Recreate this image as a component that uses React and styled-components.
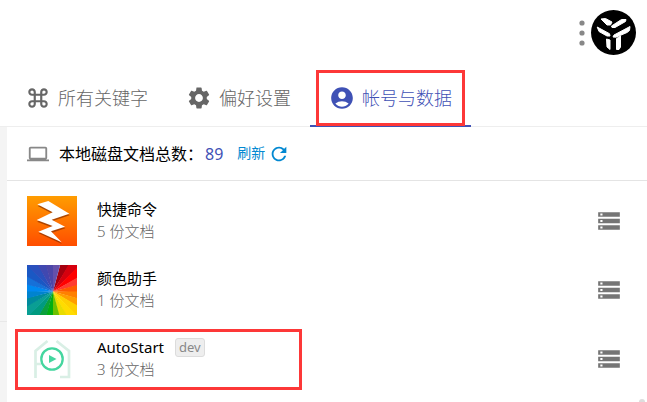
import React from "react";
import styled, { createGlobalStyle } from "styled-components";
import {
  MdKeyboardCommandKey,
  MdSettings,
  MdAccountCircle,
  MdLaptop,
  MdRefresh,
  MdStorage,
} from "react-icons/md";

const GlobalStyle = createGlobalStyle`
  *, *::before, *::after { box-sizing: border-box; }
  body {
    margin: 0;
    background: #fff;
    color: #000;
    font-family: "Noto Sans", "Noto Sans CJK SC", sans-serif;
    overflow: hidden;
  }
  button { font: inherit; border: 0; padding: 0; background: none; color: inherit; cursor: pointer; }
  svg { display: block; flex: none; }
`;

const Window = styled.div`
  position: relative;
  display: flex;
  flex-direction: column;
  min-height: 100vh;
`;

const Header = styled.header`
  display: flex;
  justify-content: flex-end;
  align-items: center;
  gap: 6px;
  padding: 10px 11px 15px;
`;

const IconButton = styled.button`
  display: flex;
`;

const Tabs = styled.nav`
  display: flex;
  padding-left: 6px;
  height: 57px;
  border-bottom: 1px solid #eee;
`;

const Tab = styled.button`
  position: relative;
  display: flex;
  align-items: center;
  gap: 7px;
  height: 57px;
  padding: 0 19px;
  font-size: 18px;
  font-weight: 300;
  color: ${(p) => (p.$active ? "#3f51b5" : "#666")};
  border-bottom: 2px solid ${(p) => (p.$active ? "#3f51b5" : "transparent")};
`;

const TabLabel = styled.span`
  padding-bottom: 2px;
`;

const TabMark = styled.span`
  position: absolute;
  inset: 0 6px -1px;
  border: 3px solid #fd3838;
  pointer-events: none;
`;

const Body = styled.div`
  flex: 1;
  display: flex;
`;

const Rail = styled.aside`
  width: 7px;
  background: #f4f4f4;
  padding-top: 194px;
`;

const RailLine = styled.div`
  height: 1px;
  background: #e8e8e8;
`;

const Panel = styled.main`
  flex: 1;
`;

const Summary = styled.section`
  display: flex;
  align-items: center;
  height: 54px;
  padding-left: 20px;
  border-bottom: 1px solid #e4e4e4;
  font-size: 16px;
`;

const SummaryText = styled.span`
  padding-bottom: 2px;
  margin-left: 10px;
`;

const Count = styled.span`
  margin-left: 2px;
  color: #3f51b5;
`;

const Refresh = styled.button`
  display: flex;
  align-items: center;
  gap: 3px;
  margin-left: 14px;
  font-size: 14px;
  color: #0288d1;
`;

const RefreshLabel = styled.span`
  padding-bottom: 3px;
`;

const List = styled.ul`
  display: flex;
  flex-direction: column;
  gap: 19px;
  margin: 0;
  padding: 15px 25px 15px 20px;
  list-style: none;
`;

const Row = styled.li`
  position: relative;
  display: flex;
  align-items: center;
  gap: 20px;
`;

const RowText = styled.div`
  flex: 1;
  padding-bottom: 2px;
  font-size: 15px;
  line-height: 22px;
`;

const Title = styled.div`
  display: flex;
  align-items: center;
  gap: 11px;
`;

const Detail = styled.div`
  color: #666;
  font-weight: 300;
`;

const Badge = styled.span`
  padding: 0 3px;
  border: 1px solid #dcdcdc;
  border-radius: 3px;
  background: #eee;
  color: #888;
  font-size: 13px;
  line-height: 17px;
`;

const RowMark = styled.span`
  position: absolute;
  inset: -5px auto -6px -12px;
  width: 287px;
  border: 3px solid #fd3838;
  pointer-events: none;
`;

const FloatingDot = styled.span`
  position: absolute;
  right: 2px;
  bottom: -3px;
  width: 6px;
  height: 6px;
  border-radius: 50%;
  background: #ddd;
`;

const Logo = () => (
  <svg width="45" height="45" viewBox="0 0 45 45" aria-hidden="true">
    <circle cx="22.5" cy="22.5" r="22.5" fill="#000" />
    <g fill="#fff" stroke="#fff" strokeWidth="1" strokeLinejoin="round">
      <path d="M10 9L14.5 8.5L21 12L19.500 15L16 15Z" />
      <path d="M20.500 16L30.500 9.5H35L34.500 11.500L24 17.500H21Z" />
      <path d="M6.200 17L18.500 23.700L19 26L16 26L8 21.500Z" />
      <path d="M39 16.500L38.500 20.500L36 22.500L25 27.200L22 27L23 25Z" />
      <path d="M15.500 29L19 30V39.500L16 37Z" />
      <path d="M25.500 28.500L29.500 26V37L28 39.500H25.500Z" />
    </g>
  </svg>
);

const Dots = () => (
  <svg width="6" height="26" viewBox="0 0 6 26" fill="#888" aria-hidden="true">
    <circle cx="3" cy="3" r="2.600" />
    <circle cx="3" cy="13" r="2.600" />
    <circle cx="3" cy="23" r="2.600" />
  </svg>
);

const BOLT = "M31 25L64 15L127 53L74 71L114 92L72 106L104 139L34 107L77 90L29 72L77 49Z";

const BoltIcon = () => (
  <svg width="50" height="50" viewBox="0 0 150 150" aria-hidden="true">
    <defs>
      <linearGradient id="bolt-bg" x1="0" y1="0" x2="0" y2="1">
        <stop offset="0" stopColor="#ff9d00" />
        <stop offset="1" stopColor="#ff4d00" />
      </linearGradient>
    </defs>
    <path d="M0 0H150V150H0Z" fill="url(#bolt-bg)" />
    <path d={BOLT} transform="translate(1 5)" fill="#8a3000" opacity=".7" />
    <path d={BOLT} fill="#fff" />
  </svg>
);

const WHEEL = [
  "#a5000f", "#d5000e", "#ff0000", "#ff3b30", "#ff5a00", "#ff8000",
  "#ff9d00", "#ffcf00", "#ffdc00", "#e8dc00", "#6cc000", "#00ae12",
  "#0ba03c", "#009a80", "#0a9e94", "#008a9c", "#0083cf", "#0088f0",
  "#1670d8", "#1a58c4", "#2a50bd", "#4048b0", "#4c46a8", "#6450aa",
];

const WheelIcon = () => (
  <svg width="50" height="50" viewBox="0 0 50 50" aria-hidden="true">
    {WHEEL.map((color, i) => {
      const step = (Math.PI * 2) / WHEEL.length;
      const start = (i + 1) * step;
      const end = start + step * (i === WHEEL.length - 1 ? 1 : 1.1);
      const point = (t) => `${26 + 60 * Math.sin(t)} ${26.5 - 60 * Math.cos(t)}`;
      return <path key={color} d={`M26 26.500L${point(start)}L${point(end)}Z`} fill={color} />;
    })}
  </svg>
);

const StartIcon = () => (
  <svg width="50" height="50" viewBox="0 0 50 50" fill="none" aria-hidden="true">
    <g stroke="#d9efe5" strokeWidth="2.700">
      <path d="M20.500 7L8.500 17V44M8.500 30H14" />
      <path d="M29.500 7L42 17V43H33" />
    </g>
    <circle cx="25" cy="25" r="10.700" fill="#fff" stroke="#45d69f" strokeWidth="2.300" />
    <path d="M22 21L29.500 25L22 29Z" fill="#45d69f" />
  </svg>
);

const TABS = [
  { label: "所有关键字", icon: MdKeyboardCommandKey },
  { label: "偏好设置", icon: MdSettings },
  { label: "帐号与数据", icon: MdAccountCircle, active: true },
];

const PLUGINS = [
  { name: "快捷命令", count: 5, icon: BoltIcon },
  { name: "颜色助手", count: 1, icon: WheelIcon },
  { name: "AutoStart", count: 3, icon: StartIcon, tag: "dev", marked: true },
];

export default function App() {
  return (
    <Window>
      <GlobalStyle />
      <Header>
        <IconButton aria-label="更多"><Dots /></IconButton>
        <IconButton aria-label="帐号"><Logo /></IconButton>
      </Header>
      <Tabs>
        {TABS.map(({ label, icon: Icon, active }) => (
          <Tab key={label} $active={active} aria-current={active ? "page" : undefined}>
            <Icon size={26} />
            <TabLabel>{label}</TabLabel>
            {active && <TabMark />}
          </Tab>
        ))}
      </Tabs>
      <Body>
        <Rail><RailLine /></Rail>
        <Panel>
          <Summary>
            <MdLaptop size={22} color="#888" />
            <SummaryText>本地磁盘文档总数：<Count>89</Count></SummaryText>
            <Refresh><RefreshLabel>刷新</RefreshLabel><MdRefresh size={22} /></Refresh>
          </Summary>
          <List>
            {PLUGINS.map(({ name, count, icon: Icon, tag, marked }) => (
              <Row key={name}>
                <Icon />
                <RowText>
                  <Title>{name}{tag && <Badge>{tag}</Badge>}</Title>
                  <Detail>{count} 份文档</Detail>
                </RowText>
                <IconButton aria-label={`${name} 数据`}><MdStorage size={26} color="#757575" /></IconButton>
                {marked && <RowMark />}
              </Row>
            ))}
          </List>
        </Panel>
      </Body>
      <FloatingDot />
    </Window>
  );
}
